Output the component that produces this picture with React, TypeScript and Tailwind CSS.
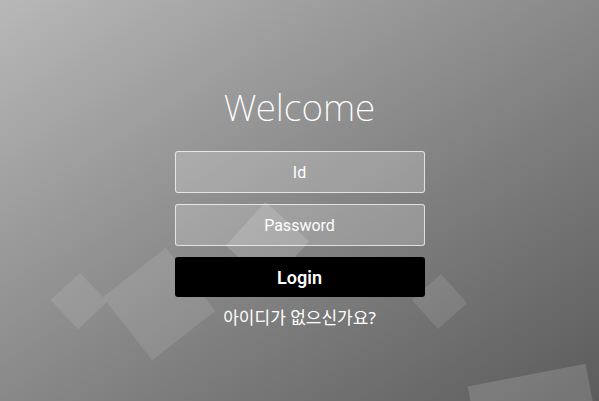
import React, { useState } from "react";

const App = () => {
  const [form, setForm] = useState({ id: "", password: "" });

  const handleChange = (e: React.ChangeEvent<HTMLInputElement>) => {
    const { name, value } = e.target;
    setForm((prev) => ({ ...prev, [name]: value }));
  };

  return (
    <div className="relative w-full h-[401px] overflow-hidden bg-gradient-to-br from-[#b8b8b8] to-[#5c5c5c] font-['Noto_Sans','Noto_Sans_CJK_KR',sans-serif]">
      {/* decorative squares */}
      <div className="absolute left-[59px] top-[281px] w-[40px] h-[40px] rotate-[-43deg] bg-white/10" />
      <div className="absolute left-[119px] top-[264px] w-[80px] h-[80px] rotate-[-38deg] bg-white/10" />
      <div className="absolute left-[238px] top-[214px] w-[59px] h-[59px] rotate-[42deg] bg-white/15" />
      <div className="absolute left-[420px] top-[282px] w-[39px] h-[39px] rotate-[48deg] bg-white/10" />
      <div className="absolute left-[478px] top-[374px] w-[120px] h-[120px] rotate-[-11deg] bg-white/15" />

      <div className="relative flex flex-col items-center pt-[81px]">
        <h2 className="text-[37px] leading-[51px] font-extralight text-white">Welcome</h2>
        <form className="mt-[19px] w-[250px] flex flex-col gap-[11px]" onSubmit={(e) => e.preventDefault()}>
          <input
            name="id"
            value={form.id}
            onChange={handleChange}
            placeholder="Id"
            className="h-[42px] w-full rounded-[3px] border border-white/70 bg-white/20 text-center text-[16px] font-['Roboto',sans-serif] text-white placeholder:text-white outline-none"
          />
          <input
            type="password"
            name="password"
            value={form.password}
            onChange={handleChange}
            placeholder="Password"
            className="h-[42px] w-full rounded-[3px] border border-white/70 bg-white/20 text-center text-[16px] font-['Roboto',sans-serif] text-white placeholder:text-white outline-none"
          />
          <button
            type="submit"
            className="h-[40px] w-full rounded-[3px] bg-black text-white text-[18px] font-semibold font-['Roboto',sans-serif]"
          >
            Login
          </button>
        </form>
        <a href="#" className="mt-[8px] text-[17px] text-white">
          아이디가 없으신가요?
        </a>
      </div>
    </div>
  );
};

export default App;
